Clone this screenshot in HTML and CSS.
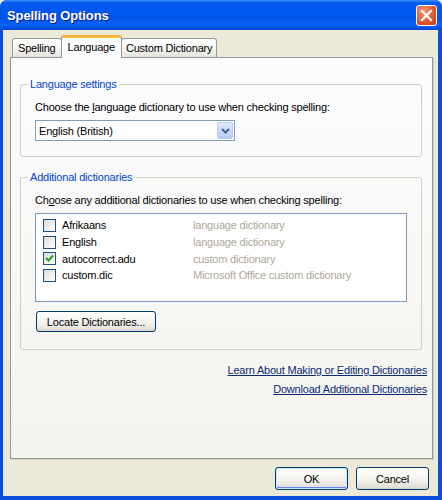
FILE: index.html
```html
<!DOCTYPE html>
<html>
<head lang="en">
<meta charset="UTF-8">
<title>Spelling Options</title>
<link rel="stylesheet" href="styles.css">
</head>
<body>
<div class="window">
  <div class="titlebar">
    <span class="title">Spelling Options</span>
    <button class="close" title="Close">
      <svg width="13" height="13" viewBox="0 0 13 13">
        <path d="M2 2 L11 11 M11 2 L2 11" stroke="#fff" stroke-width="2.2" stroke-linecap="square"/>
      </svg>
    </button>
  </div>

  <div class="client">
    <ul class="tabs">
      <li class="tab first">Spelling</li>
      <li class="tab active">Language</li>
      <li class="tab">Custom Dictionary</li>
    </ul>

    <div class="panel">
      <fieldset class="group">
        <legend>Language settings</legend>
        <p class="label">Choose the <u>l</u>anguage dictionary to use when checking spelling:</p>
        <div class="combo">
          <span class="combo-value">English (British)</span>
          <span class="combo-btn">
            <svg width="9" height="6" viewBox="0 0 9 6">
              <path d="M1 1 L4.5 4.5 L8 1" fill="none" stroke="#4d6185" stroke-width="2"/>
            </svg>
          </span>
        </div>
      </fieldset>

      <fieldset class="group">
        <legend>Additional dictionaries</legend>
        <p class="label">Ch<u>o</u>ose any additional dictionaries to use when checking spelling:</p>
        <div class="listbox">
          <div class="row">
            <span class="check"></span>
            <span class="name">Afrikaans</span>
            <span class="desc">language dictionary</span>
          </div>
          <div class="row">
            <span class="check"></span>
            <span class="name">English</span>
            <span class="desc">language dictionary</span>
          </div>
          <div class="row">
            <span class="check checked">
              <svg width="9" height="9" viewBox="0 0 9 9">
                <path d="M1 4 L3.5 6.5 L8 1.5" fill="none" stroke="#21a121" stroke-width="2"/>
              </svg>
            </span>
            <span class="name">autocorrect.adu</span>
            <span class="desc">custom dictionary</span>
          </div>
          <div class="row">
            <span class="check"></span>
            <span class="name">custom.dic</span>
            <span class="desc">Microsoft Office custom dictionary</span>
          </div>
        </div>
        <button class="btn locate">Locate Dictionaries...</button>
      </fieldset>

      <div class="links">
        <a href="#">Learn About Making or Editing Dictionaries</a>
        <a href="#">Download Additional Dictionaries</a>
      </div>
    </div>

    <div class="actions">
      <button class="btn default">OK</button>
      <button class="btn">Cancel</button>
    </div>
  </div>
</div>
</body>
</html>
```

FILE: styles.css
```css
html, body {
  margin: 0;
  padding: 0;
}

body {
  font-family: "Liberation Sans", Arial, sans-serif;
  font-size: 11px;
  letter-spacing: -0.2px;
  color: #000;
  background: #ece9d8;
}

.window {
  width: 442px;
  height: 500px;
  box-sizing: border-box;
  display: flex;
  flex-direction: column;
  background: #0a4fe0;
  border-radius: 7px 7px 0 0;
  overflow: hidden;
}

/* title bar */
.titlebar {
  height: 30px;
  flex: none;
  display: flex;
  align-items: center;
  justify-content: space-between;
  padding: 0 5px 0 7px;
  background: linear-gradient(#3d95ff 0, #0a5ef0 8%, #0058ee 30%, #0055e9 60%, #0a62f5 85%, #0045d0 100%);
}

.title {
  color: #fff;
  font-weight: bold;
  font-size: 13px;
  letter-spacing: -0.1px;
  text-shadow: 1px 1px 0 #0a1e8c;
  margin-top: 1px;
}

.close {
  width: 21px;
  height: 21px;
  padding: 0;
  margin-top: 1px;
  border: 1px solid #fff;
  border-radius: 3px;
  background: radial-gradient(circle at 35% 30%, #f79a7c 0, #e2572f 55%, #c83c14 100%);
  display: flex;
  align-items: center;
  justify-content: center;
}

/* client area */
.client {
  flex: 1;
  display: flex;
  flex-direction: column;
  margin: 0 4px 4px 3px;
  padding: 5px 5px 0 7px;
  background: #ece9d8;
}

.tabs {
  list-style-type: none;
  margin: 0;
  padding: 0 0 0 2px;
  display: flex;
  align-items: flex-end;
  height: 22px;
  position: relative;
  z-index: 1;
}

.tab {
  height: 18px;
  line-height: 18px;
  padding: 0 4px;
  border: 1px solid #919b9c;
  border-bottom: none;
  border-radius: 3px 3px 0 0;
  background: linear-gradient(#fff, #f3f3ef 60%, #e4e3dc);
  margin-right: -1px;
}

.tab.first {
  padding: 0 5px;
}

.tab.active {
  height: 21px;
  line-height: 21px;
  padding: 0 6px;
  border-top: 2px solid #f8ae3e;
  box-shadow: inset 0 1px 0 #ffc83c;
  background: #fcfcfe;
  margin-bottom: -1px;
  position: relative;
  z-index: 2;
}

.panel {
  height: 402px;
  box-sizing: border-box;
  border: 1px solid #919b9c;
  box-shadow: 1px 1px 0 #d0cebf;
  background: linear-gradient(#fcfcfe, #f4f3ee);
  padding: 20px 5px 0 9px;
  display: flex;
  flex-direction: column;
}

/* group boxes */
.group {
  margin: 0 5px 14px 0;
  padding: 5px 14px 0 14px;
  border: 1px solid #d0d0bf;
  border-radius: 3px;
}

.group legend {
  color: #0046d5;
  padding: 0 2px;
  margin-left: -7px;
}

.label {
  margin: 6px 0 7px 0;
}

/* combo box */
.combo {
  width: 200px;
  height: 21px;
  box-sizing: border-box;
  border: 1px solid #7f9db9;
  background: #fff;
  display: flex;
  align-items: center;
  justify-content: space-between;
  padding: 0 1px 0 3px;
  margin-bottom: 15px;
}

.combo-btn {
  width: 16px;
  height: 17px;
  box-sizing: border-box;
  border: 1px solid #b9cbf5;
  border-radius: 2px;
  background: linear-gradient(#dde7fd, #b7cbf8);
  display: flex;
  align-items: center;
  justify-content: center;
}

/* list with check boxes */
.listbox {
  height: 89px;
  box-sizing: border-box;
  border: 1px solid #7f9db9;
  background: #fff;
  padding: 3px 0 0 7px;
}

.row {
  height: 16.7px;
  display: flex;
  align-items: center;
}

.check {
  width: 13px;
  height: 13px;
  box-sizing: border-box;
  border: 1px solid #1c5180;
  background: linear-gradient(135deg, #dcdcd7, #fff);
  display: flex;
  align-items: center;
  justify-content: center;
  margin-right: 6px;
  flex: none;
}

.name {
  width: 131px;
}

.desc {
  color: #aca899;
}

/* buttons */
.btn {
  font-family: "Liberation Sans", Arial, sans-serif;
  font-size: 11px;
  letter-spacing: -0.2px;
  color: #000;
  height: 21px;
  border: 1px solid #003c74;
  border-radius: 3px;
  background: linear-gradient(#fff, #f5f4ef 50%, #e3e2da 90%, #d6d0c5);
  padding: 0 6px;
  white-space: nowrap;
}

.locate {
  margin: 9px 0 17px 1px;
  width: 120px;
}

.links {
  display: flex;
  flex-direction: column;
  align-items: flex-end;
  gap: 7px;
}

.links a {
  color: #0b2a7a;
  text-decoration: underline;
}

.actions {
  display: flex;
  justify-content: flex-end;
  gap: 8px;
  padding: 8px 4px 0 0;
}

.actions .btn {
  width: 73px;
  height: 23px;
}

.btn.default {
  box-shadow: inset 0 0 0 1px #cee7ff, inset 0 -1px 0 1px #6982ee;
}
```
